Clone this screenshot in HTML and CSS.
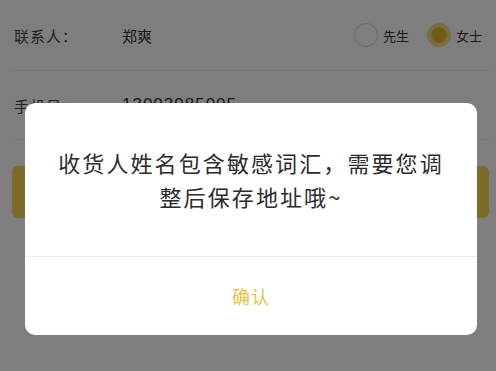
FILE: index.html
```html
<!DOCTYPE html>
<html lang="zh-CN">
<head>
  <meta charset="UTF-8">
  <meta name="viewport" content="width=device-width, initial-scale=1.0">
  <title>收货地址</title>
  <link rel="stylesheet" href="styles.css">
</head>
<body>
  <div class="page">
    <div class="row">
      <span class="label">联系人：</span>
      <span class="value">郑爽</span>
      <div class="gender">
        <span class="radio"></span><span class="radio-text">先生</span>
        <span class="radio checked"></span><span class="radio-text">女士</span>
      </div>
    </div>
    <div class="row">
      <span class="label">手机号：</span>
      <span class="value phone">13003985005</span>
    </div>
    <!-- 保存按钮（被弹窗挡住） -->
    <div class="save-btn"></div>
  </div>

  <div class="mask">
    <div class="dialog">
      <div class="dialog-body">
        <p>收货人姓名包含敏感词汇，需要您调</p>
        <p>整后保存地址哦~</p>
      </div>
      <div class="dialog-footer">确认</div>
    </div>
  </div>
</body>
</html>
```

FILE: styles.css
```css
body {
  margin: 0;
  padding: 0;
  font-family: "Noto Sans CJK SC", "Liberation Sans", sans-serif;
  background: #fdfdfd;
  width: 496px;
  height: 371px;
  overflow: hidden;
  position: relative;
}
.page {
  padding: 0 7px 0 12px;
}
.row {
  display: flex;
  align-items: center;
  height: 68px;
  border-bottom: 1px solid #f0f0f0;
  padding-left: 2px;
}
.row:first-child {
  height: 70px;
}
.label {
  width: 108px;
  font-size: 15px;
  color: #444;
  letter-spacing: 1px;
}
.value {
  font-size: 15px;
  color: #333;
}
.phone {
  font-family: "Liberation Sans", sans-serif;
  font-size: 17px;
  letter-spacing: 1px;
}
.gender {
  margin-left: auto;
  padding-right: 7px;
  display: flex;
  align-items: center;
}
.radio {
  width: 24px;
  height: 24px;
  border: 1.5px solid #d4d4d4;
  border-radius: 50%;
  box-sizing: border-box;
  margin-right: 5px;
}
.radio.checked {
  margin-left: 18px;
  border: 3px solid #f7dc8c;
  background: radial-gradient(circle, #e6b32c 0 7px, #f5d37a 8px);
}
.radio-text {
  font-size: 13px;
  color: #333;
}
.save-btn {
  height: 52px;
  margin-top: 26px;
  border-radius: 6px;
  background: #fcd64e;
}
.mask {
  position: absolute;
  inset: 0;
  background: rgba(0, 0, 0, 0.5);
}
.dialog {
  position: absolute;
  left: 25px;
  top: 103px;
  width: 452px;
  height: 232px;
  background: #fff;
  border-radius: 10px;
  display: flex;
  flex-direction: column;
}
.dialog-body {
  height: 154px;
  border-bottom: 1px solid #ececec;
  box-sizing: border-box;
  padding-top: 45px;
}
.dialog-body p {
  margin: 0 0 6px;
  text-align: center;
  font-size: 22px;
  line-height: 28px;
  letter-spacing: 2.1px;
  color: #2b2b2b;
}
.dialog-footer {
  flex: 1;
  display: flex;
  align-items: center;
  justify-content: center;
  font-size: 18px;
  color: #e9c33f;
  letter-spacing: 1px;
}
```
